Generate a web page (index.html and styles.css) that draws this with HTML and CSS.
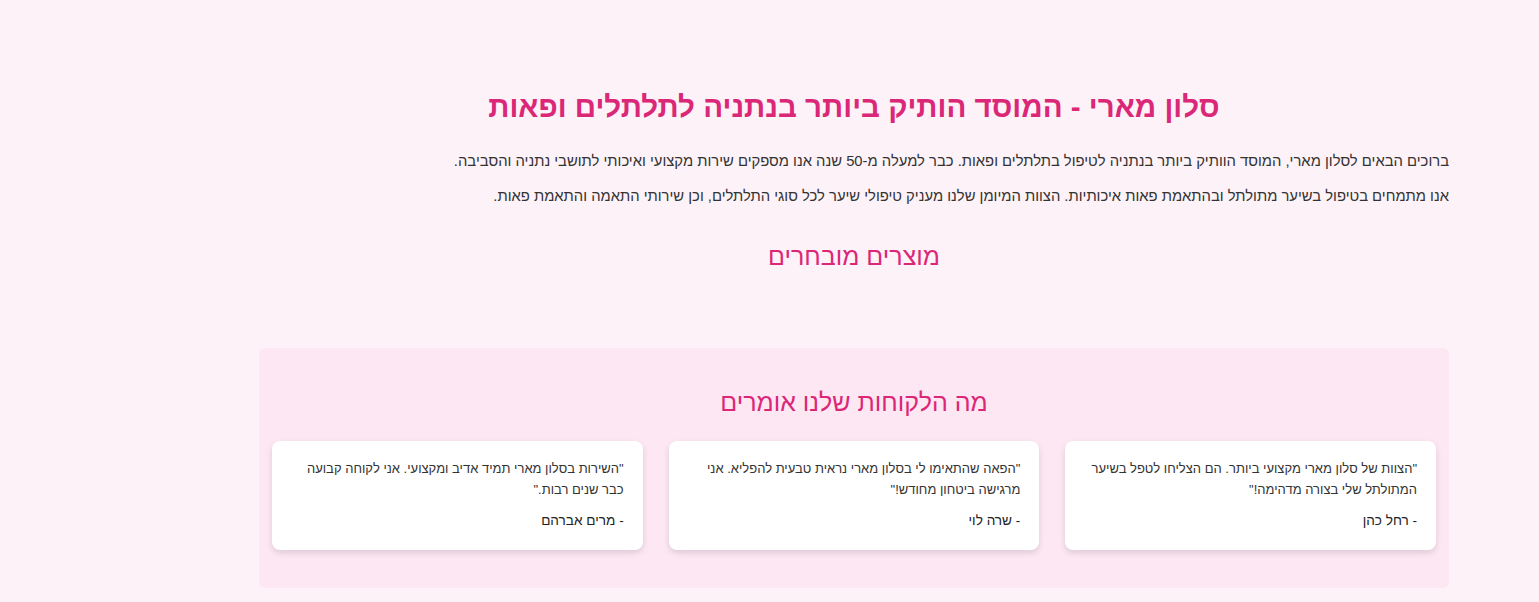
FILE: index.html
```html
<!DOCTYPE html>
<html lang="he" dir="rtl">
<head>
<meta charset="utf-8">
<title>סלון מארי</title>
<link rel="stylesheet" href="styles.css">
</head>
<body>
<main class="page">
  <section class="intro">
    <h1 class="title">סלון מארי - המוסד הותיק ביותר בנתניה לתלתלים ופאות</h1>
    <p class="lead">ברוכים הבאים לסלון מארי, המוסד הוותיק ביותר בנתניה לטיפול בתלתלים ופאות. כבר למעלה מ-50 שנה אנו מספקים שירות מקצועי ואיכותי לתושבי נתניה והסביבה.</p>
    <p class="lead">אנו מתמחים בטיפול בשיער מתולתל ובהתאמת פאות איכותיות. הצוות המיומן שלנו מעניק טיפולי שיער לכל סוגי התלתלים, וכן שירותי התאמה והתאמת פאות.</p>
  </section>
  <section class="products">
    <h2 class="section-title">מוצרים מובחרים</h2>
  </section>
  <section class="testimonials">
    <h2 class="section-title">מה הלקוחות שלנו אומרים</h2>
    <div class="cards">
      <div class="card">
        <p class="quote">"הצוות של סלון מארי מקצועי ביותר. הם הצליחו לטפל בשיער המתולתל שלי בצורה מדהימה!"</p>
        <p class="author">- רחל כהן</p>
      </div>
      <div class="card">
        <p class="quote">"הפאה שהתאימו לי בסלון מארי נראית טבעית להפליא. אני מרגישה ביטחון מחודש!"</p>
        <p class="author">- שרה לוי</p>
      </div>
      <div class="card">
        <p class="quote">"השירות בסלון מארי תמיד אדיב ומקצועי. אני לקוחה קבועה כבר שנים רבות."</p>
        <p class="author">- מרים אברהם</p>
      </div>
    </div>
  </section>
</main>
</body>
</html>
```

FILE: styles.css
```css
* { box-sizing: border-box; }
html, body { margin: 0; padding: 0; }
body {
  background: #fdf2f8;
  font-family: "Liberation Sans", "DejaVu Sans", sans-serif;
  color: #333;
  height: 602px;
  overflow: hidden;
}
.page {
  width: 1190px;
  margin-right: 90px;
  padding-top: 84px;
}
.title {
  margin: 0;
  text-align: center;
  color: #db2777;
  font-size: 29.5px;
  font-weight: bold;
  line-height: 46px;
}
.intro { margin-bottom: 31px; }
.lead {
  margin: 20px 0 0;
  font-size: 14.8px;
  line-height: 22px;
  color: #333;
}
.lead + .lead { margin-top: 13px; }
.section-title {
  margin: 0;
  text-align: center;
  color: #db2777;
  font-size: 25px;
  font-weight: normal;
  line-height: 36px;
}
.products { height: 110px; }
.testimonials {
  background: #fce7f3;
  border-radius: 6px;
  padding: 36px 13px 38px;
}
.testimonials .section-title { margin-bottom: 21px; }
.cards {
  display: grid;
  grid-template-columns: repeat(3, 1fr);
  gap: 26px;
}
.card {
  background: #fff;
  border-radius: 8px;
  padding: 17px 19px 19px;
  box-shadow: 0 3px 6px rgba(0,0,0,0.12);
}
.quote {
  margin: 0;
  font-size: 13px;
  line-height: 21px;
  color: #333;
}
.author {
  margin: 10px 0 0;
  font-size: 13.6px;
  line-height: 21px;
  font-weight: 500;
  color: #222;
}
```
